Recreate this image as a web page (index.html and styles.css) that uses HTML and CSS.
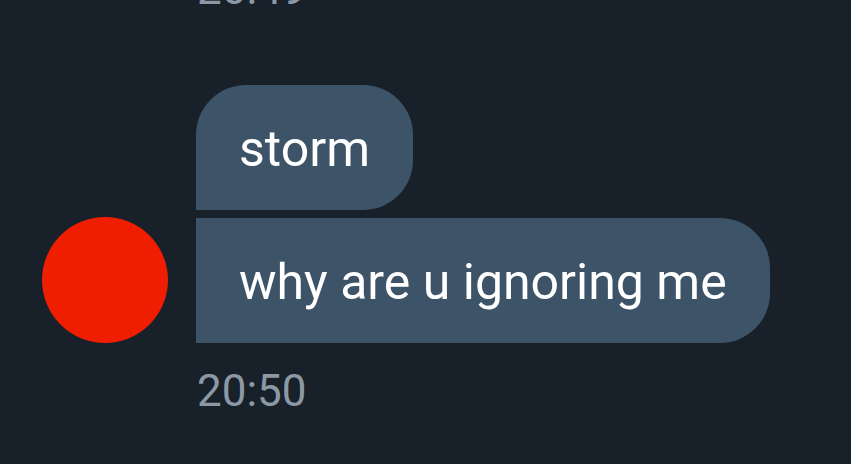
FILE: index.html
```html
<!DOCTYPE html>
<html lang="en">

<head>
  <meta charset="UTF-8">
  <meta name="viewport" content="width=device-width, initial-scale=1.0">
  <title>Chat</title>
  <link rel="stylesheet" href="styles.css">
</head>

<body>
  <div class="chat">
    <div class="msg-group prev">
      <div class="spacer"></div>
      <div class="time">20:49</div>
    </div>

    <div class="msg-group">
      <div class="avatar"></div>
      <div class="bubbles">
        <div class="bubble first">storm</div>
        <div class="bubble last">why are u ignoring me</div>
      </div>
      <div class="spacer"></div>
      <div class="time">20:50</div>
    </div>
  </div>
</body>

</html>
```

FILE: styles.css
```css
* {
  margin: 0;
  padding: 0;
  box-sizing: border-box;
}

body {
  font-family: 'Roboto', 'Noto Sans', sans-serif;
  background: #18202a;
  color: #ffffff;
  height: 100vh;
  overflow: hidden;
}

.chat {
  padding-left: 42px;
  display: flex;
  flex-direction: column;
}

.msg-group {
  display: grid;
  grid-template-columns: 126px 1fr;
  column-gap: 28px;
  align-items: end;
}

.msg-group.prev {
  margin-top: -37px;
  margin-bottom: 70px;
}

.avatar {
  width: 126px;
  height: 126px;
  border-radius: 50%;
  background: #f01e00;
}

.bubbles {
  display: flex;
  flex-direction: column;
  align-items: flex-start;
  gap: 8px;
}

.bubble {
  background: #3d5468;
  font-size: 50px;
  line-height: 59px;
  padding: 35px 43px 31px;
  border-radius: 50px;
}

.bubble.first {
  border-bottom-left-radius: 0;
}

.bubble.last {
  border-top-left-radius: 0;
  border-bottom-left-radius: 0;
}

.time {
  font-size: 44px;
  line-height: 52px;
  color: #8c99a5;
  padding-left: 1px;
}

.msg-group .bubbles + .spacer + .time {
  margin-top: 22px;
}
```
